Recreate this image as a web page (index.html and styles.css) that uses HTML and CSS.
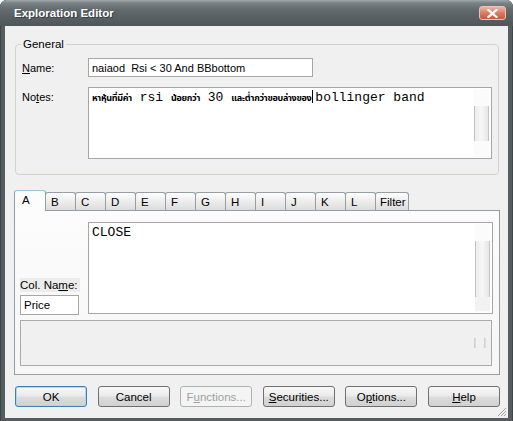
FILE: index.html
```html
<!DOCTYPE html>
<html>
<head>
<meta charset="utf-8">
<title>Exploration Editor</title>
<link rel="stylesheet" href="styles.css">
</head>
<body>
<div class="window">
  <div class="titlebar">
    <span class="title">Exploration Editor</span>
    <span class="close"><svg width="11" height="9" viewBox="0 0 11 9"><path d="M1.5 1 L9.5 8 M9.5 1 L1.5 8" stroke="#fff" stroke-width="2.2" stroke-linecap="square"/></svg></span>
  </div>
  <div class="client">
    <fieldset class="group">
      <legend>General</legend>
      <div class="row">
        <label class="lbl"><u>N</u>ame:</label>
        <div class="input name-input">naiaod&nbsp; Rsi &lt; 30 And BBbottom</div>
      </div>
      <div class="row notes-row">
        <label class="lbl notes-lbl">No<u>t</u>es:</label>
        <div class="memo notes">
          <div class="memo-text"><span class="th">หาหุ้นที่มีค่า</span> rsi <span class="th">น้อยกว่า</span> 30 <span class="th">และต่ำกว่าขอบล่างของ</span><span class="caret"></span>bollinger band</div>
          <div class="vscroll notes-scroll"><div class="thumb"></div></div>
        </div>
      </div>
    </fieldset>

    <div class="tabs">
      <div class="tab active">A</div>
      <div class="tab">B</div>
      <div class="tab">C</div>
      <div class="tab">D</div>
      <div class="tab">E</div>
      <div class="tab">F</div>
      <div class="tab">G</div>
      <div class="tab">H</div>
      <div class="tab">I</div>
      <div class="tab">J</div>
      <div class="tab">K</div>
      <div class="tab">L</div>
      <div class="tab filter">Filter</div>
    </div>
    <div class="panel">
      <div class="panel-top">
        <div class="colname">
          <span class="colname-lbl">Col. Na<u>m</u>e:</span>
          <div class="input price">Price</div>
        </div>
        <div class="memo formula">
          <div class="memo-text">CLOSE</div>
          <div class="vscroll formula-scroll"><div class="thumb"></div><div class="rest"></div></div>
        </div>
      </div>
      <div class="box"><div class="marks"><i></i><i></i></div></div>
    </div>

    <div class="buttons">
      <div class="btn default">OK</div>
      <div class="btn">Cancel</div>
      <div class="btn disabled">F<u>u</u>nctions...</div>
      <div class="btn"><u>S</u>ecurities...</div>
      <div class="btn">O<u>p</u>tions...</div>
      <div class="btn"><u>H</u>elp</div>
    </div>
    <svg class="grip" width="11" height="11" viewBox="0 0 11 11"><path d="M10 2 L2 10 M10 5 L5 10 M10 8 L8 10" stroke="#a0a0a0" stroke-width="1"/></svg>
  </div>
</div>
</body>
</html>
```

FILE: styles.css
```css
* { box-sizing: border-box; }
html, body { margin: 0; padding: 0; }
body {
  width: 513px;
  height: 421px;
  overflow: hidden;
  background: #fff;
  font-family: "Liberation Sans", Arial, sans-serif;
  font-size: 11px;
  color: #000;
}
u { text-decoration: underline; text-underline-offset: 1px; }

.window {
  width: 513px;
  height: 421px;
  background: #555d61;
  border-radius: 7px 7px 0 0;
  display: flex;
  flex-direction: column;
  box-shadow: inset 1px 0 0 #3f4649, inset -1px 0 0 #3f4649;
}
.titlebar {
  height: 26px;
  flex: none;
  display: flex;
  align-items: center;
  justify-content: space-between;
  padding: 0 7px 0 14px;
  border-radius: 7px 7px 0 0;
  background: linear-gradient(#a2a9ad 0, #7a8286 3px, #646c70 9px, #596165 16px, #4f575b 26px);
}
.title {
  color: #fff;
  font-weight: bold;
  font-size: 11.5px;
  letter-spacing: 0;
  text-shadow: 1px 1px 0 #3a4043;
}
.close {
  width: 27px;
  height: 14px;
  border: 1px solid #e9c4b9;
  border-radius: 3px;
  background: linear-gradient(#eeb4a4, #dc7c65 50%, #c9573f);
  display: flex;
  align-items: center;
  justify-content: center;
}

.client {
  flex: 1;
  position: relative;
  margin: 0 5px 3px;
  background: #f0f0f0;
  padding: 11px 8px 11px 9px;
  display: flex;
  flex-direction: column;
}

.group {
  margin: 0 1px;
  padding: 7px 6px 15px 6px;
  border: 1px solid #d3d3cc;
  border-radius: 4px;
  min-width: 0;
}
.group legend {
  padding: 0 2px;
  margin-left: -1px;
  line-height: 14px;
  font-size: 11.5px;
}
.row { display: flex; align-items: center; }
.lbl { width: 66px; flex: none; }
.notes-row { margin-top: 10px; align-items: flex-start; }
.notes-lbl { padding-top: 4px; }

.input {
  border: 1px solid #a6a6a6;
  background: #fff;
  padding: 0 3px;
  display: flex;
  align-items: center;
  white-space: nowrap;
}
.name-input { width: 225px; height: 19px; font-size: 11px; }

.memo {
  border: 1px solid #a6a6a6;
  background: #fff;
  display: flex;
}
.memo-text {
  flex: 1;
  padding: 2px 3px;
  font-family: "Liberation Mono", "Courier New", monospace;
  font-size: 13px;
  line-height: 15px;
  white-space: nowrap;
  overflow: hidden;
}
.th {
  font-family: "Noto Sans Thai", "Noto Sans", "DejaVu Sans", sans-serif;
  font-size: 9px;
  font-weight: bold;
  letter-spacing: -0.3px;
}
.caret {
  display: inline-block;
  width: 1px;
  height: 13px;
  background: #000;
  vertical-align: -2px;
  margin: 0 2px 0 1px;
}
.notes { width: 405px; height: 72px; }

.vscroll {
  width: 15px;
  flex: none;
  margin: 1px 2px 1px 0;
  display: flex;
  flex-direction: column;
  background: #fbfbfb;
}
.vscroll .thumb {
  border-left: 1px solid #c4c4c4;
  border-right: 1px solid #c4c4c4;
  background: linear-gradient(90deg, #ececec, #f7f7f7 50%, #e6e6e6);
}
.notes-scroll { padding-top: 17px; }
.notes-scroll .thumb { height: 35px; }
.formula-scroll { padding-top: 17px; }
.formula-scroll .thumb { height: 56px; }
.formula-scroll .rest { height: 14px; background: #f2f2f2; }

.tabs {
  margin-top: 15px;
  height: 21px;
  display: flex;
  align-items: flex-end;
  position: relative;
  z-index: 2;
}
.tab {
  width: 31px;
  height: 18px;
  margin-bottom: 1px;
  margin-left: -1px;
  border: 1px solid #959fa3;
  border-bottom: none;
  border-radius: 3px 3px 0 0;
  background: linear-gradient(#fdfdfd, #f0f0f0 40%, #dcdcdc);
  padding: 2px 0 0 5px;
  font-size: 11.5px;
  line-height: 14px;
}
.tab.active {
  width: 32px;
  height: 21px;
  margin-left: 0;
  margin-bottom: 0;
  background: #fcfcfc;
  border-top-color: #9cc4d6;
  padding: 2px 0 0 7px;
  z-index: 3;
}
.tab.filter { width: 34px; padding-left: 4px; }

.panel {
  margin-top: -1px;
  height: 165px;
  border: 1px solid #959fa3;
  background: linear-gradient(#fcfcfc, #f6f6f6);
  padding: 11px 6px 8px 5px;
  display: flex;
  flex-direction: column;
}
.panel-top { display: flex; align-items: flex-end; height: 92px; }
.colname { width: 59px; margin-right: 9px; display: flex; flex-direction: column; align-items: flex-start; }
.colname-lbl {
  background: #ececec;
  line-height: 14px;
  padding: 0 2px 0 0;
  margin-bottom: 3px;
  font-size: 11.5px;
  white-space: nowrap;
}
.price { width: 59px; height: 20px; font-size: 11.5px; padding-left: 3px; margin-bottom: -1px; }
.formula { flex: 1; height: 92px; }

.box {
  margin-top: 6px;
  width: 472px;
  height: 46px;
  border: 1px solid #ababab;
  background: #f0f0f0;
  display: flex;
  align-items: center;
  justify-content: flex-end;
  padding-right: 2px;
}
.marks { display: flex; gap: 8px; width: 15px; height: 10px; }
.marks i { display: block; width: 2px; height: 10px; background: #dcdcdc; border-left: 1px solid #cfcfcf; }

.buttons {
  margin: 11px 0 0 1px;
  display: flex;
  justify-content: space-between;
}
.btn {
  width: 72px;
  height: 21px;
  border: 1px solid #707070;
  border-radius: 3px;
  background: linear-gradient(#f9f9f9, #ebebeb 45%, #dcdcdc 55%, #d0d0d0);
  display: flex;
  align-items: center;
  justify-content: center;
  font-size: 11.5px;
}
.btn.default {
  border-color: #3c7fb1;
  box-shadow: inset 0 0 0 1px #a9daf4;
}
.btn.disabled {
  border-color: #adb2b5;
  background: #f4f4f4;
  color: #a0a0a0;
}

.grip { position: absolute; right: 1px; bottom: 1px; }
```
